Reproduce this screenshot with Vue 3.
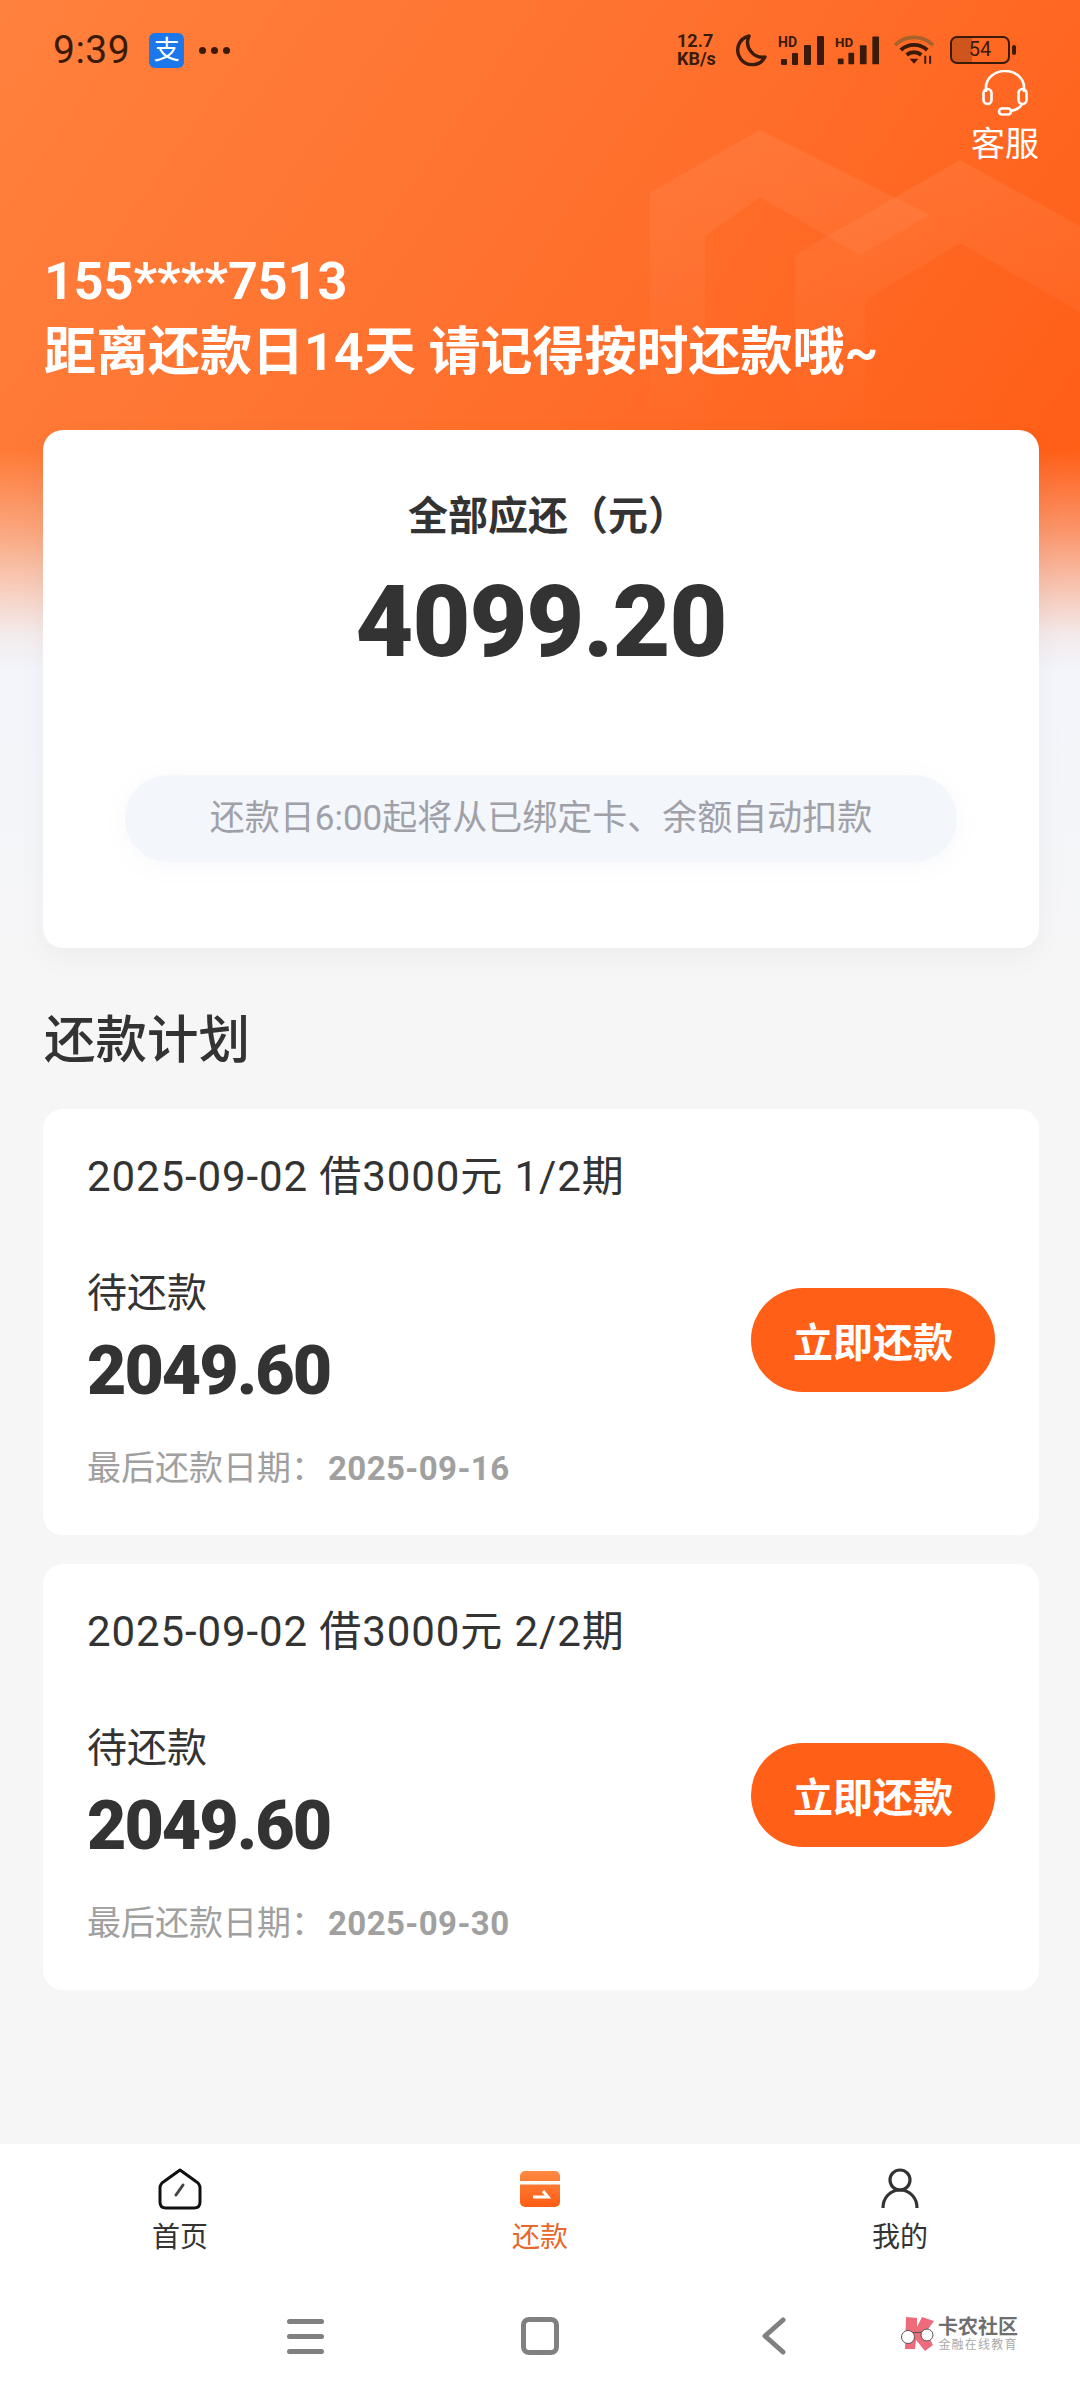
<template>
  <div class="page">
    <div class="header-bg">
      <svg class="hex-deco" width="1080" height="660" viewBox="0 0 1080 660">
        <defs>
          <linearGradient id="hexFade" x1="0" y1="0" x2="0" y2="1">
            <stop offset="0" stop-color="#fff" stop-opacity="0.07" />
            <stop offset="1" stop-color="#fff" stop-opacity="0" />
          </linearGradient>
        </defs>
        <path d="M760 130 L650 193 V440 H705 V236 L760 197 L860 255 L930 215 Z" fill="url(#hexFade)" />
        <path d="M960 160 L795 255 V440 H865 V300 L960 243 L1080 312 V226 Z" fill="url(#hexFade)" />
      </svg>
    </div>

    <div class="status-bar">
      <div class="status-left">
        <span class="clock">9:39</span>
        <span class="alipay">支</span>
        <span class="more-dots"><i></i><i></i><i></i></span>
      </div>
      <div class="status-right">
        <span class="speed"><span>12.7</span><span>KB/s</span></span>
        <svg class="moon" width="32" height="34" viewBox="0 0 32 34">
          <path d="M14 3 A14.5 14.5 0 1 0 30 24 A15 15 0 0 1 14 3 Z" fill="none" stroke="#3a1a08" stroke-width="3.4" stroke-linejoin="round" />
        </svg>
        <svg class="signal" width="47" height="32" viewBox="0 0 47 32">
          <text x="0" y="13" class="hd">HD</text>
          <rect x="3" y="25" width="6" height="6" rx="1" fill="#3a1a08" />
          <rect x="14" y="19" width="6" height="12" rx="1" fill="#3a1a08" />
          <rect x="26" y="11" width="7" height="20" rx="1" fill="#3a1a08" />
          <rect x="39" y="2" width="7" height="29" rx="1" fill="#3a1a08" />
        </svg>
        <svg class="signal signal-second" width="45" height="32" viewBox="0 0 47 32">
          <text x="0" y="13" class="hd">HD</text>
          <rect x="3" y="25" width="6" height="6" rx="1" fill="#3a1a08" />
          <rect x="14" y="19" width="6" height="12" rx="1" fill="#3a1a08" />
          <rect x="26" y="11" width="7" height="20" rx="1" fill="#3a1a08" />
          <rect x="39" y="2" width="7" height="29" rx="1" fill="#3a1a08" />
        </svg>
        <svg class="wifi" width="43" height="32" viewBox="0 0 44 32">
          <path d="M2 11 A28 28 0 0 1 41 11" fill="none" stroke="#a8622c" stroke-width="4" />
          <path d="M8 16 A20 20 0 0 1 35 16" fill="none" stroke="#3a1a08" stroke-width="4" />
          <path d="M14 21 A12 12 0 0 1 29 21" fill="none" stroke="#3a1a08" stroke-width="4" />
          <path d="M17 25 L26 25 L21.5 30 Z" fill="#3a1a08" />
          <path d="M33 30 V22 M38 22 V30" stroke="#3a1a08" stroke-width="2" />
        </svg>
        <span class="battery"><span class="battery-fill"></span><span class="battery-num">54</span></span>
        <span class="battery-cap"></span>
      </div>
    </div>

    <div class="service">
      <svg width="48" height="46" viewBox="0 0 48 46" fill="none" stroke="#fff" stroke-width="2.6">
        <path d="M5 22 V17 A19 16 0 0 1 43 17 V22" />
        <rect x="2.5" y="19" width="8" height="15" rx="4" />
        <rect x="37.5" y="19" width="8" height="15" rx="4" />
        <path d="M41 34 Q38 40 29 41" />
        <rect x="18" y="38.5" width="12" height="6" rx="3" />
      </svg>
      <span>客服</span>
    </div>

    <div class="greeting">
      <div class="phone">155****7513</div>
      <div class="tip">距离还款日14天 请记得按时还款哦~</div>
    </div>

    <section class="total-card">
      <div class="total-label">全部应还（元）</div>
      <div class="total-amount">4099.20</div>
      <div class="total-note">还款日6:00起将从已绑定卡、余额自动扣款</div>
    </section>

    <h2 class="plan-title">还款计划</h2>

    <section v-for="item in plans" :key="item.period" class="plan-card">
      <div class="plan-head">2025-09-02 借3000元 {{ item.period }}期</div>
      <div class="plan-body">
        <div>
          <div class="plan-status">待还款</div>
          <div class="plan-amount">2049.60</div>
        </div>
        <button class="pay-btn">立即还款</button>
      </div>
      <div class="plan-date">最后还款日期：<b>{{ item.date }}</b></div>
    </section>

    <div class="spacer"></div>

    <nav class="tabbar">
      <div class="tab">
        <svg width="44" height="42" viewBox="0 0 44 42" fill="none" stroke="#111" stroke-width="3" stroke-linejoin="round">
          <path d="M22 2 L38 13.5 Q42 16 42 20 V34 Q42 40 36 40 H8 Q2 40 2 34 V20 Q2 16 6 13.5 Z" />
          <path d="M18 27 L25 17" stroke="#444" stroke-linecap="round" />
        </svg>
        <span>首页</span>
      </div>
      <div class="tab tab-active">
        <svg width="42" height="42" viewBox="0 0 42 42">
          <defs>
            <linearGradient id="repayFill" x1="0" y1="0" x2="0" y2="1">
              <stop offset="0" stop-color="#ff8a42" />
              <stop offset="1" stop-color="#ff5c14" />
            </linearGradient>
          </defs>
          <rect x="1" y="3" width="40" height="36" rx="5" fill="url(#repayFill)" />
          <rect x="1" y="13" width="40" height="3.5" fill="#fff" />
          <path d="M24 23 L29 29 H14" fill="none" stroke="#fff" stroke-width="3" />
        </svg>
        <span>还款</span>
      </div>
      <div class="tab">
        <svg width="44" height="42" viewBox="0 0 44 42" fill="none" stroke="#333" stroke-width="3.2">
          <circle cx="22" cy="12" r="10" />
          <path d="M5 40 C5 30 12 22 22 22 C32 22 39 30 39 40" />
        </svg>
        <span>我的</span>
      </div>
    </nav>

    <div class="navbar">
      <span class="nav-menu"><i></i><i></i><i></i></span>
      <span class="nav-home"></span>
      <svg class="nav-back" width="24" height="38" viewBox="0 0 24 38" fill="none" stroke="#808080" stroke-width="5" stroke-linecap="round" stroke-linejoin="round">
        <path d="M21 3 L3 19 L21 35" />
      </svg>
      <div class="watermark">
        <svg width="36" height="36" viewBox="0 0 36 36">
          <path d="M6 1 L17 2 L17 11 L22 1 L34 5 L26 16 L33 29 L25 35 L16 24 L15 33 L5 33 Z" fill="#ee6b7c" />
          <path d="M8 17 L26 16" stroke="#555" stroke-width="1.2" />
          <circle cx="8" cy="21" r="6.5" fill="#fff" stroke="#555" stroke-width="1" />
          <circle cx="27" cy="19" r="6" fill="#fff" stroke="#555" stroke-width="1" />
        </svg>
        <div class="watermark-text">
          <div class="wm-main">卡农社区</div>
          <div class="wm-sub">金融在线教育</div>
        </div>
      </div>
    </div>
  </div>
</template>

<script setup>
const plans = [
  { period: '1/2', date: '2025-09-16' },
  { period: '2/2', date: '2025-09-30' }
]
</script>

<style scoped>
.page {
  position: relative;
  width: 1080px;
  height: 2400px;
  overflow: hidden;
  display: flex;
  flex-direction: column;
  background: linear-gradient(to bottom, #f3f5fb 670px, #f6f6f6 1000px);
  font-family: "Roboto", "Noto Sans CJK SC", sans-serif;
  color: #333;
}

.header-bg {
  position: absolute;
  left: 0;
  top: 0;
  width: 1080px;
  height: 680px;
  background:
    linear-gradient(
      to bottom,
      rgba(243, 245, 251, 0) 450px,
      rgba(243, 245, 251, 0.35) 527px,
      rgba(243, 245, 251, 0.75) 600px,
      rgba(243, 245, 251, 0.92) 634px,
      #f3f5fb 670px
    ),
    linear-gradient(125deg, #ff813d 0, #ff6f2c 50%, #ff5a12 100%);
}

.hex-deco {
  display: block;
}

.status-bar,
.service,
.greeting,
.total-card,
.plan-title,
.plan-card {
  position: relative;
}

.status-bar {
  display: flex;
  justify-content: space-between;
  align-items: center;
  height: 68px;
  margin-top: 16px;
  margin-bottom: -14px;
  padding: 0 64px 0 53px;
  color: #3a1a08;
}

.status-left,
.status-right {
  display: flex;
  align-items: center;
}

.clock {
  font-size: 39px;
  line-height: 36px;
  letter-spacing: 0.5px;
}

.alipay {
  width: 35px;
  height: 35px;
  margin-left: 19px;
  border-radius: 6px;
  background: #1c78ea;
  color: #fff;
  font-size: 26px;
  line-height: 34px;
  text-align: center;
}

.more-dots {
  display: flex;
  gap: 5px;
  margin-left: 15px;
}

.more-dots i {
  width: 7px;
  height: 7px;
  border-radius: 50%;
  background: #3a1a08;
}

.speed {
  display: flex;
  flex-direction: column;
  width: 47px;
  font-size: 18px;
  font-weight: 700;
  line-height: 18px;
  white-space: nowrap;
}

.moon {
  margin-left: 11px;
}

.signal {
  margin-left: 11px;
}

.signal-second {
  margin-left: 10px;
}

.hd {
  font: 700 14px "Roboto", sans-serif;
  fill: #3a1a08;
}

.wifi {
  margin-left: 13px;
}

.battery {
  position: relative;
  width: 60px;
  height: 28px;
  margin-left: 14px;
  border: 2.5px solid #3a1a08;
  border-radius: 7px;
  box-sizing: border-box;
  overflow: hidden;
  text-align: center;
}

.battery-fill {
  position: absolute;
  left: 0;
  top: 0;
  bottom: 0;
  width: 35%;
  background: rgba(58, 26, 8, 0.25);
}

.battery-num {
  position: relative;
  display: block;
  font-size: 20px;
  line-height: 23px;
}

.battery-cap {
  width: 4px;
  height: 10px;
  margin-left: 2px;
  border-radius: 2px;
  background: #3a1a08;
}

.service {
  display: flex;
  flex-direction: column;
  align-items: center;
  align-self: flex-end;
  width: 70px;
  margin-right: 40px;
  color: #fff;
  font-size: 34px;
  line-height: 40px;
}

.service span {
  margin-top: 8px;
  white-space: nowrap;
}

.greeting {
  margin-top: 83px;
  padding-left: 44px;
  color: #fff;
  font-weight: 700;
}

.phone {
  font-size: 52px;
  line-height: 70px;
}

.tip {
  font-size: 52px;
  line-height: 72px;
  white-space: nowrap;
}

.total-card {
  box-sizing: border-box;
  width: 996px;
  height: 518px;
  margin: 41px 0 0 43px;
  padding-top: 60px;
  border-radius: 20px;
  background: #fff;
  box-shadow: 0 10px 30px rgba(0, 0, 0, 0.04);
  text-align: center;
}

.total-label {
  padding-left: 14px;
  font-size: 40px;
  font-weight: 700;
  line-height: 54px;
}

.total-amount {
  margin-top: 23px;
  font-size: 100px;
  font-weight: 900;
  line-height: 110px;
  letter-spacing: -1px;
}

.total-note {
  width: 832px;
  height: 87px;
  margin: 98px auto 0;
  border-radius: 44px;
  background: #f3f6fb;
  box-shadow: 0 4px 24px rgba(120, 140, 180, 0.06);
  color: #a0a1a8;
  font-size: 35px;
  line-height: 87px;
}

.plan-title {
  margin: 63px 0 9px 44px;
  font-size: 51.5px;
  font-weight: 500;
  line-height: 60px;
}

.plan-card {
  box-sizing: border-box;
  width: 996px;
  height: 426px;
  margin: 29px 0 0 43px;
  padding: 40px 44px 0;
  border-radius: 20px;
  background: #fff;
}

.plan-head {
  font-size: 42px;
  line-height: 56px;
  letter-spacing: 0.9px;
  white-space: nowrap;
}

.plan-body {
  display: flex;
  justify-content: space-between;
  align-items: center;
  margin-top: 62px;
}

.plan-status {
  font-size: 40px;
  line-height: 54px;
}

.plan-amount {
  margin-top: 10px;
  font-size: 68px;
  font-weight: 900;
  line-height: 80px;
  letter-spacing: -2px;
}

.pay-btn {
  width: 244px;
  height: 104px;
  margin-top: 2px;
  border: 0;
  border-radius: 52px;
  background: #ff5f16;
  color: #fff;
  font-family: inherit;
  font-size: 40px;
  font-weight: 700;
}

.plan-date {
  margin-top: 34px;
  color: #a0a0a0;
  font-size: 34px;
  line-height: 46px;
}

.plan-date b {
  margin-left: 3px;
  font-size: 33px;
  font-weight: 700;
  letter-spacing: 0.4px;
}

.spacer {
  flex: 1;
}

.tabbar {
  position: relative;
  display: grid;
  grid-template-columns: repeat(3, 1fr);
  height: 144px;
  padding-top: 24px;
  box-sizing: border-box;
  background: #fff;
}

.tab {
  display: flex;
  flex-direction: column;
  align-items: center;
  font-size: 28px;
  line-height: 40px;
}

.tab span {
  margin-top: 8px;
}

.tab-active {
  color: #e8672a;
}

.navbar {
  position: relative;
  display: flex;
  align-items: center;
  height: 112px;
  padding: 0 0 16px 287px;
  box-sizing: border-box;
  background: #fff;
}

.nav-menu {
  display: flex;
  flex-direction: column;
  gap: 10px;
  width: 37px;
}

.nav-menu i {
  height: 5px;
  border-radius: 3px;
  background: #808080;
}

.nav-home {
  box-sizing: border-box;
  width: 38px;
  height: 38px;
  margin-left: 197px;
  border: 5px solid #808080;
  border-radius: 8px;
}

.nav-back {
  margin-left: 203px;
}

.watermark {
  position: absolute;
  left: 900px;
  top: 28px;
  display: flex;
  align-items: center;
  gap: 2px;
}

.watermark-text {
  text-align: center;
}

.wm-main {
  color: #6f6f6f;
  font-size: 20px;
  font-weight: 700;
  line-height: 22px;
  white-space: nowrap;
}

.wm-sub {
  color: #aaa;
  font-size: 12px;
  line-height: 14px;
  letter-spacing: 1.2px;
  white-space: nowrap;
}
</style>
